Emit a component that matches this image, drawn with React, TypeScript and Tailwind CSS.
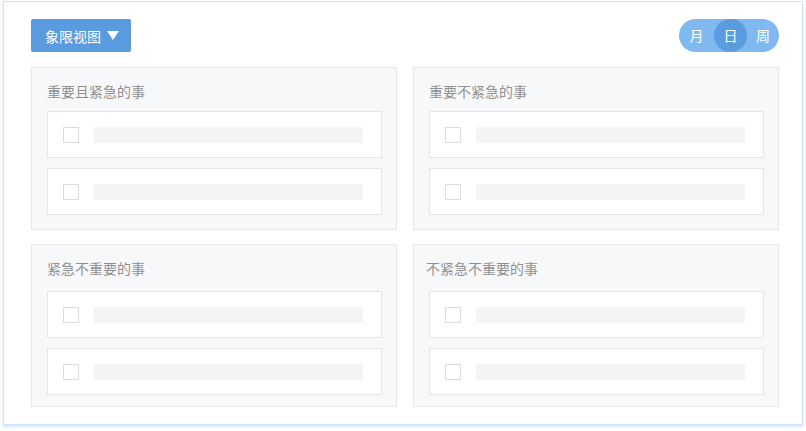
import React from "react";

const font = { fontFamily: '"Noto Sans CJK SC", "Noto Sans", sans-serif' };

function Card() {
  return (
    <div className="flex h-[47px] items-center border border-[#e6e6e6] bg-white pl-[15px] pr-[18px]">
      <div className="h-4 w-4 shrink-0 border border-[#dcdcdc] bg-white" />
      <div className="ml-[15px] h-4 flex-1 bg-[#f4f4f4]" />
    </div>
  );
}

function Quadrant({ title, titlePad, listGap }: { title: string; titlePad: string; listGap: string }) {
  return (
    <div className="flex h-[163px] flex-col border border-[#e8e8e8] bg-[#f7f8fa] pl-[15px] pr-[14px] pt-[13px]">
      <div className={`h-5 text-[14px] leading-5 text-[#909090] ${titlePad}`}>{title}</div>
      <div className={`flex flex-col gap-[10px] ${listGap}`}>
        <Card />
        <Card />
      </div>
    </div>
  );
}

export default function App() {
  return (
    <div className="h-[431px] w-[806px] bg-white" style={font}>
      <div className="ml-[3px] mt-[1px] h-[424px] w-[800px] border border-[#cfe3f8] bg-white pl-[27px] pr-[23px] pt-[17px] shadow-[0_2px_3px_rgba(150,195,245,0.45)]">
        <div className="flex h-[33px] items-center justify-between">
          <button className="flex h-[33px] w-[100px] items-center rounded-[2px] bg-[#5a9be0] pl-[14px] text-[14px] text-white">
            <span className="leading-5">象限视图</span>
            <svg className="ml-[6px]" width="12" height="9" viewBox="0 0 12 9">
              <polygon points="0,0 12,0 6,9" fill="#ffffff" />
            </svg>
          </button>
          <div className="flex h-[33px] w-[100px] items-center rounded-full bg-[#80b8f0] text-[14px] text-white">
            <span className="flex h-[33px] w-[35px] items-center justify-center">月</span>
            <span className="flex h-[33px] w-[33px] items-center justify-center rounded-full bg-[#5b9be0]">日</span>
            <span className="flex h-[33px] w-[32px] items-center justify-center">周</span>
          </div>
        </div>
        <div className="mt-[15px] grid grid-cols-2 gap-x-4 gap-y-[14px]">
          <Quadrant title="重要且紧急的事" titlePad="" listGap="mt-[10px]" />
          <Quadrant title="重要不紧急的事" titlePad="" listGap="mt-[10px]" />
          <Quadrant title="紧急不重要的事" titlePad="" listGap="mt-[13px]" />
          <Quadrant title="不紧急不重要的事" titlePad="-ml-[3px]" listGap="mt-[13px]" />
        </div>
      </div>
    </div>
  );
}
